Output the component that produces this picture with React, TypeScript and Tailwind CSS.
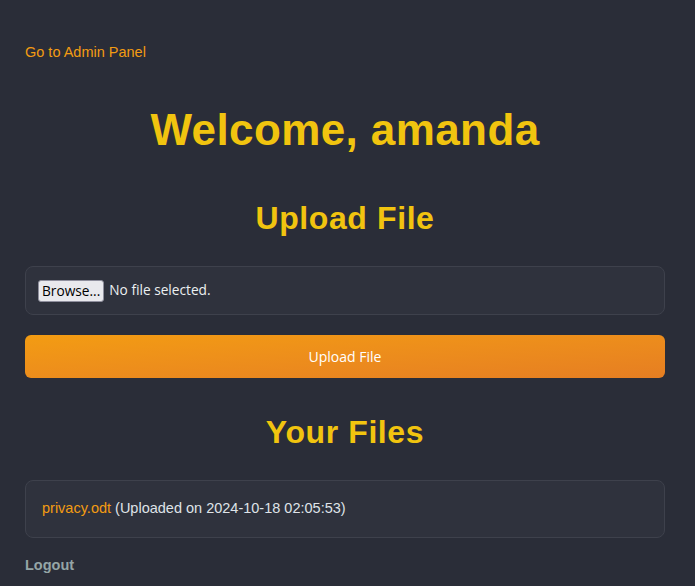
import React from 'react';

const files = [{ name: 'privacy.odt', uploaded: '2024-10-18 02:05:53' }];

const App = () => {
  return (
    <div className="min-h-screen bg-[#2a2d38] font-['Liberation_Sans',Arial,sans-serif] text-[#dfe3e8]">
      <div className="pl-[25px] pr-[30px] pt-[44px] pb-4">
        <a href="#" className="block text-[14.5px] leading-[17px] text-[#f39c12]">
          Go to Admin Panel
        </a>

        <h1 className="mt-[43px] text-center text-[44px] font-bold leading-[52px] tracking-[0.4px] text-[#f1c40f]">
          Welcome, amanda
        </h1>

        <h2 className="mt-[43px] text-center text-[32px] font-bold leading-[38px] tracking-[0.6px] text-[#f1c40f]">
          Upload File
        </h2>

        <form className="mt-[29px] flex flex-col gap-[20px]">
          <div className="flex h-[49px] items-center rounded-[8px] border border-[#3e414c] bg-[#2f323d] px-[12px]">
            <div className="flex items-center gap-[5px] font-['Open_Sans',sans-serif] text-[13.7px]">
              <span className="rounded-[3px] border border-[#8f8f9d] bg-[#e9e9ed] px-[3px] leading-[20px] text-black">
                Browse...
              </span>
              <span className="text-[#ecf0f1]">No file selected.</span>
            </div>
          </div>
          <button
            type="button"
            className="h-[43px] w-full rounded-[6px] bg-gradient-to-br from-[#f39c12] to-[#e67e22] font-['Open_Sans',sans-serif] text-[14px] text-white"
          >
            Upload File
          </button>
        </form>

        <h2 className="mt-[35px] text-center text-[32px] font-bold leading-[38px] tracking-[0.6px] text-[#f1c40f]">
          Your Files
        </h2>

        <ul className="mt-[29px]">
          {files.map((f) => (
            <li
              key={f.name}
              className="flex h-[58px] items-center rounded-[8px] border border-[#3e414c] bg-[#2f323d] px-[16px] text-[14.5px]"
            >
              <a href="#" className="text-[#f39c12]">
                {f.name}
              </a>
              <span className="ml-[4px]">(Uploaded on {f.uploaded})</span>
            </li>
          ))}
        </ul>

        <a href="#" className="mt-[19px] block text-[14.5px] font-bold leading-[17px] text-[#95a5a6]">
          Logout
        </a>
      </div>
    </div>
  );
};

export default App;
